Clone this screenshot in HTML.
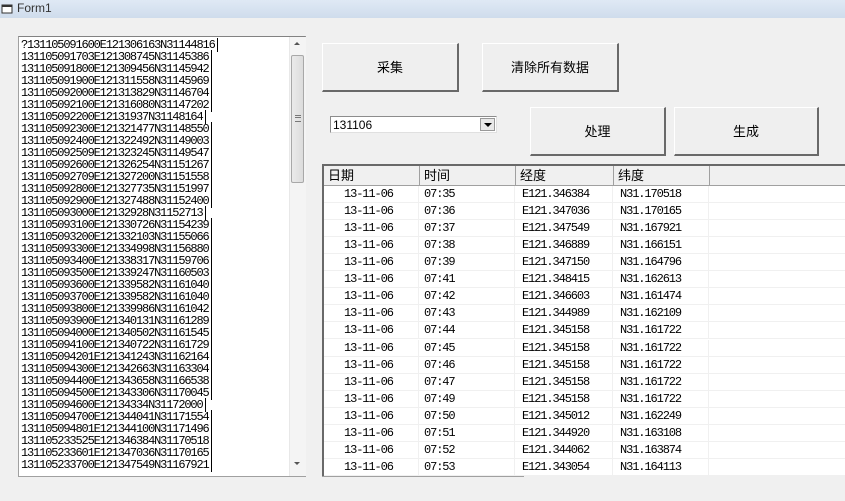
<!DOCTYPE html>
<html><head><meta charset="utf-8"><style>
body{margin:0;width:845px;height:501px;background:#f0f0f0;position:relative;overflow:hidden;font-family:"Liberation Sans","Noto Sans CJK SC",sans-serif;font-size:12px}
.title{position:absolute;left:0;top:0;width:845px;height:18px;background:linear-gradient(#dfe9f5,#cfdcec);color:#333;font-size:12px}
.title span{position:absolute;left:17px;top:1px}
.ta{position:absolute;left:18px;top:36px;width:286px;height:439px;background:#fff;border:1px solid #a0a0a0;border-top-color:#828282}
.lines{position:absolute;left:2px;top:2px;font-family:"Liberation Mono",monospace;font-size:12px;line-height:12px;letter-spacing:-1.15px;color:#000;white-space:pre}
.lines span{border-right:1px solid #000;padding-right:2px}
.sb{position:absolute;left:270px;top:0;width:16px;height:439px;background:#f4f4f4;border-left:1px solid #e8e8e8}
.thumb{position:absolute;left:1px;top:18px;width:13px;height:128px;background:linear-gradient(90deg,#eaeaea,#dcdcdc);border:1px solid #a8a8a8;border-radius:2px;box-sizing:border-box}
.btn{position:absolute;background:#efefef;border:1px solid #fff;border-right:2px solid #696969;border-bottom:2px solid #696969;box-sizing:border-box;text-align:center;font-size:13px;color:#000}
.combo{position:absolute;left:330px;top:116px;width:167px;height:17px;background:#fff;border:1px solid #8c8c8c;border-bottom-color:#e0e0e0;border-right-color:#e0e0e0;box-sizing:border-box;font-size:12px}
.combo .t{position:absolute;left:2px;top:1px}
.combo .a{position:absolute;right:1px;top:1px;width:15px;height:13px;background:#e8e8e8;border:1px solid #999;box-sizing:border-box}
.combo .a:after{content:"";position:absolute;left:3px;top:4px;border:4px solid transparent;border-top:4px solid #000}
.tbl{position:absolute;left:322px;top:164px;width:523px;height:312px;background:#fff;border-left:2px solid #696969;border-top:2px solid #696969;box-sizing:border-box;overflow:hidden}
.hdr{position:absolute;left:0;top:0;height:19px;width:600px;background:#f0f0f0;border-bottom:1px solid #a0a0a0}
.hc{position:absolute;top:0;height:19px;border-right:1px solid #a0a0a0;box-sizing:border-box;padding-left:4px;line-height:19px;font-size:13px}
.row{position:absolute;left:0;height:17px;width:600px;border-bottom:1px solid #f0f0f0;box-sizing:border-box;font-family:"Liberation Mono",monospace;font-size:12px;letter-spacing:-1.1px;line-height:17px}
.row div{position:absolute;top:0;height:17px;border-right:1px solid #f0f0f0}
</style></head><body>
<div class="title"><span>Form1</span><svg style="position:absolute;left:1px;top:3px" width="13" height="12"><rect x="1" y="2" width="10" height="8" fill="#fff" stroke="#333"/><rect x="1" y="2" width="10" height="2" fill="#333"/></svg></div>
<div class="ta"><div class="lines"><span>?131105091600E121306163N31144816</span>
<span>131105091703E121308745N31145386</span>
<span>131105091800E121309456N31145942</span>
<span>131105091900E121311558N31145969</span>
<span>131105092000E121313829N31146704</span>
<span>131105092100E121316080N31147202</span>
<span>131105092200E12131937N31148164</span>
<span>131105092300E121321477N31148550</span>
<span>131105092400E121322492N31149003</span>
<span>131105092509E121323245N31149547</span>
<span>131105092600E121326254N31151267</span>
<span>131105092709E121327200N31151558</span>
<span>131105092800E121327735N31151997</span>
<span>131105092900E121327488N31152400</span>
<span>131105093000E12132928N31152713</span>
<span>131105093100E121330726N31154239</span>
<span>131105093200E121332103N31155066</span>
<span>131105093300E121334998N31156880</span>
<span>131105093400E121338317N31159706</span>
<span>131105093500E121339247N31160503</span>
<span>131105093600E121339582N31161040</span>
<span>131105093700E121339582N31161040</span>
<span>131105093800E121339986N31161042</span>
<span>131105093900E121340131N31161289</span>
<span>131105094000E121340502N31161545</span>
<span>131105094100E121340722N31161729</span>
<span>131105094201E121341243N31162164</span>
<span>131105094300E121342663N31163304</span>
<span>131105094400E121343658N31166538</span>
<span>131105094500E121343306N31170045</span>
<span>131105094600E12134334N31172000</span>
<span>131105094700E121344041N31171554</span>
<span>131105094801E121344100N31171496</span>
<span>131105233525E121346384N31170518</span>
<span>131105233601E121347036N31170165</span>
<span>131105233700E121347549N31167921</span></div>
<div class="sb"><div style="position:absolute;left:4px;top:5px;border:3px solid transparent;border-bottom:3px solid #555;border-top:0"></div><div class="thumb"><div style="position:absolute;left:3px;top:59px;width:6px;height:5px;border-top:1px solid #777;border-bottom:1px solid #777"></div><div style="position:absolute;left:3px;top:61px;width:6px;border-top:1px solid #777"></div></div><div style="position:absolute;left:4px;top:425px;border:3px solid transparent;border-top:3px solid #555;border-bottom:0"></div></div></div>
<div class="btn" style="left:322px;top:43px;width:137px;height:49px;line-height:47px">采集</div>
<div class="btn" style="left:482px;top:43px;width:137px;height:49px;line-height:47px">清除所有数据</div>
<div class="combo"><span class="t">131106</span><div class="a"></div></div>
<div class="btn" style="left:530px;top:107px;width:136px;height:49px;line-height:47px">处理</div>
<div class="btn" style="left:674px;top:107px;width:145px;height:49px;line-height:47px">生成</div>
<div class="tbl"><div class="hdr">
<div class="hc" style="left:0;width:96px">日期</div><div class="hc" style="left:96px;width:96px">时间</div><div class="hc" style="left:192px;width:98px">经度</div><div class="hc" style="left:290px;width:96px">纬度</div></div>
<div id="rows"></div></div>
<div style="position:absolute;left:322px;top:476px;width:202px;height:1px;background:#a0a0a0"></div>
<script>
var d=[["07:35","E121.346384","N31.170518"],["07:36","E121.347036","N31.170165"],["07:37","E121.347549","N31.167921"],["07:38","E121.346889","N31.166151"],["07:39","E121.347150","N31.164796"],["07:41","E121.348415","N31.162613"],["07:42","E121.346603","N31.161474"],["07:43","E121.344989","N31.162109"],["07:44","E121.345158","N31.161722"],["07:45","E121.345158","N31.161722"],["07:46","E121.345158","N31.161722"],["07:47","E121.345158","N31.161722"],["07:49","E121.345158","N31.161722"],["07:50","E121.345012","N31.162249"],["07:51","E121.344920","N31.163108"],["07:52","E121.344062","N31.163874"],["07:53","E121.343054","N31.164113"]];
var h="";d.forEach(function(r,i){h+='<div class="row" style="top:'+(20+i*17.06)+'px"><div style="left:0;width:95px;padding-left:20px;box-sizing:border-box">13-11-06</div><div style="left:96px;width:95px;padding-left:4px;box-sizing:border-box">'+r[0]+'</div><div style="left:192px;width:97px;padding-left:6px;box-sizing:border-box">'+r[1]+'</div><div style="left:290px;width:95px;padding-left:6px;box-sizing:border-box">'+r[2]+'</div></div>'});
document.getElementById("rows").innerHTML=h;
</script>
</body></html>
